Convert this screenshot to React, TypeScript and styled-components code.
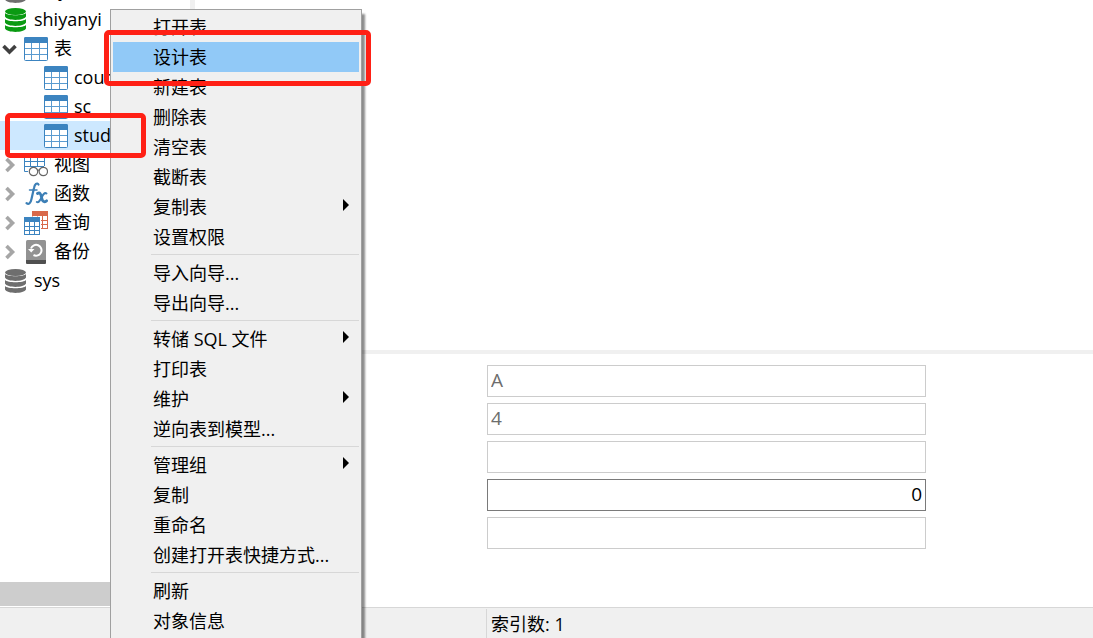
import React from "react";
import styled, { createGlobalStyle } from "styled-components";

const GlobalStyle = createGlobalStyle`
  * { box-sizing: border-box; }
  body {
    margin: 0;
    background: #ffffff;
    color: #000000;
    font-family: "Open Sans", "Noto Sans CJK SC", sans-serif;
    font-size: 18px;
    line-height: 28px;
  }
`;

const Page = styled.div`
  position: relative;
  display: flex;
  flex-direction: column;
  height: 100vh;
  overflow: hidden;
`;

const Workspace = styled.div`
  display: flex;
  flex: 1;
  min-height: 0;
`;

const Sidebar = styled.aside`
  display: flex;
  flex-direction: column;
  width: 195px;
  border-right: 5px solid #f0f0f0;
`;

const Tree = styled.ul`
  display: flex;
  flex: 1;
  flex-direction: column;
  justify-content: flex-start;
  min-height: 0;
  margin: -24px 0 0;
  padding: 0;
  list-style: none;
`;

const TreeRow = styled.li<{ $depth: number; $selected?: boolean }>`
  display: flex;
  flex: none;
  align-items: center;
  height: 29px;
  padding-left: ${(p) => [4, 2, 44][p.$depth]}px;
  background: ${(p) => (p.$selected ? "#cde8ff" : "transparent")};
  white-space: nowrap;

  svg { flex: none; }
`;

const Chevron = styled.svg`
  width: 16px;
  height: 16px;
  margin-right: 6px;
`;

const TreeLabel = styled.span`
  margin-left: 6px;
  padding-bottom: 1px;
`;

const HorizontalScroll = styled.div`
  height: 24px;
  margin-bottom: 1px;
  background: #cdcdcd;
`;

const Main = styled.main`
  display: flex;
  flex: 1;
  flex-direction: column;
  min-width: 0;
`;

const Canvas = styled.section`
  flex: 1;
`;

const Properties = styled.form`
  display: flex;
  flex-direction: column;
  gap: 6px;
  height: 257px;
  padding: 11px 167px 0 292px;
  border-top: 4px solid #f0f0f0;
`;

const Field = styled.input<{ $active?: boolean }>`
  width: 100%;
  height: 32px;
  padding: 0 3px 2px;
  border: 1px solid ${(p) => (p.$active ? "#7a7a7a" : "#cccccc")};
  border-radius: 0;
  outline: none;
  background: #ffffff;
  color: ${(p) => (p.$active ? "#000000" : "#6d6d6d")};
  font: inherit;
  font-size: 19px;
  text-align: ${(p) => (p.$active ? "right" : "left")};
`;

const StatusBar = styled.footer`
  display: flex;
  height: 31px;
  padding-top: 1px;
  border-top: 1px solid #d7d7d7;
  background: #f0f0f0;
`;

const StatusCell = styled.div<{ $first?: boolean }>`
  flex: ${(p) => (p.$first ? "0 0 486px" : "1")};
  padding: 1px 4px 0;
  border-left: ${(p) => (p.$first ? "none" : "1px solid #d7d7d7")};
`;

const Menu = styled.div`
  position: absolute;
  top: 9px;
  left: 110px;
  width: 252px;
  padding: 2px 2px 40px;
  border: 1px solid #a0a0a0;
  background: #f0f0f0;
  box-shadow: 3px 5px 2px rgba(0, 0, 0, 0.45);
`;

const MenuItem = styled.button<{ $active?: boolean }>`
  display: flex;
  align-items: center;
  justify-content: space-between;
  width: 100%;
  height: 30px;
  padding: 0 10px 0 40px;
  border: 0;
  background: ${(p) => (p.$active ? "#91c9f7" : "transparent")};
  color: inherit;
  font: inherit;
  text-align: left;
  white-space: nowrap;
`;

const ArrowGlyph = styled.svg`
  width: 6px;
  height: 12px;
  margin-bottom: 4px;
`;

const MenuRule = styled.hr`
  height: 1px;
  margin: 2px 0 3px 38px;
  border: 0;
  background: #d7d7d7;
`;

const Highlight = styled.div<{ $box: [number, number, number, number] }>`
  position: absolute;
  left: ${(p) => p.$box[0]}px;
  top: ${(p) => p.$box[1]}px;
  width: ${(p) => p.$box[2]}px;
  height: ${(p) => p.$box[3]}px;
  border: 5px solid #ff2015;
  border-radius: 5px;
  pointer-events: none;
`;

const DatabaseIcon = ({ color }: { color: string }) => (
  <svg width="24" height="24" viewBox="0 0 24 24" fill={color}>
    <ellipse cx="11.5" cy="3.5" rx="10.5" ry="3.5" />
    {[5, 11, 17].map((y) => (
      <path key={y} d={`M1 ${y}C3 ${y + 3} 20 ${y + 3} 22 ${y}V${y + 3.5}C20 ${y + 8} 3 ${y + 8} 1 ${y + 3.5}Z`} />
    ))}
  </svg>
);

const TableIcon = () => (
  <svg width="24" height="24" viewBox="0 0 24 24">
    <rect x="0.5" y="0.5" width="23" height="23" rx="1" fill="#fff" stroke="#3c84c0" />
    <path d="M0 6V1.5Q0 0 1.5 0H22.5Q24 0 24 1.5V6Z" fill="#3c84c0" />
    <path d="M7.5 6V23M15.5 6V23M1 11.5H23M1 17.5H23" stroke="#5a9bd0" fill="none" />
  </svg>
);

const ViewIcon = () => (
  <svg width="24" height="24" viewBox="0 0 24 24" fill="none">
    <path d="M0 5V1.5Q0 0 1.5 0H19.5Q21 0 21 1.5V5Z" fill="#3c84c0" />
    <path d="M0.5 4V18.5H4M20.5 4V13M6.5 5V14M13.5 5V14M1 8.5H20M1 13.5H20" stroke="#3c84c0" />
    <circle cx="9.5" cy="18.5" r="4.2" fill="#fff" stroke="#666" strokeWidth="1.2" />
    <circle cx="19.3" cy="18.5" r="4.2" fill="#fff" stroke="#666" strokeWidth="1.2" />
    <path d="M13.5 17.5Q14.4 16.5 15.3 17.5" stroke="#666" strokeWidth="1.2" />
  </svg>
);

const FunctionIcon = () => (
  <svg width="24" height="24" viewBox="0 0 24 24" fill="none" stroke="#3c7fb6" strokeLinecap="round">
    <path d="M14.5 2.5C13 0.2 10.8 2 10 6L7.5 17C6.7 21 4.8 23 2.5 21.2" strokeWidth="2.2" />
    <path d="M5.5 8H13" strokeWidth="1.5" />
    <path d="M13.5 11.5C16 9.8 17 12.5 17.6 15.5C18.3 19 19.5 21 22.6 18.8" strokeWidth="2.8" />
    <path d="M22.5 11.5C20.5 10 18.8 13 17.6 15.5C16 18.5 14.5 21 12.8 20" strokeWidth="2" />
  </svg>
);

const QueryIcon = () => (
  <svg width="24" height="24" viewBox="0 0 24 24" fill="none">
    <rect x="8.5" y="0.5" width="15" height="17" fill="#fff" stroke="#d9694a" />
    <path d="M8 0H24V5H8Z" fill="#d9694a" />
    <path d="M13.5 5V17M18.5 5V17M9 9.5H23M9 13.5H23" stroke="#d9694a" />
    <path d="M0 5.5H17V24H0Z" fill="#fff" />
    <rect x="0.5" y="6.5" width="15" height="17" fill="#fff" stroke="#3c84c0" />
    <path d="M0 6H16V11H0Z" fill="#3c84c0" />
    <path d="M5.5 11V23M10.5 11V23M1 15.5H15M1 19.5H15" stroke="#3c84c0" />
  </svg>
);

const BackupIcon = () => (
  <svg width="24" height="24" viewBox="0 0 24 24" fill="none">
    <rect x="2" y="0" width="20" height="24" rx="1.5" fill="#929292" />
    <path d="M2 20H22V22.5Q22 24 20.5 24H3.5Q2 24 2 22.5Z" fill="#505050" />
    <path d="M7 8.5A5.4 5.4 0 1 1 9.5 15" stroke="#fff" strokeWidth="2" />
    <path d="M4 9H10.5L7.2 12.5Z" fill="#fff" />
  </svg>
);

const Expander = ({ open }: { open?: boolean }) => (
  <Chevron viewBox="0 0 16 16" fill="none" strokeWidth="3.6" stroke={open ? "#404040" : "#a6a6a6"}>
    <path d={open ? "M1.5 5L7.5 11L13.5 5" : "M4.5 2L10.5 8L4.5 14"} />
  </Chevron>
);

const SubmenuArrow = () => (
  <ArrowGlyph viewBox="0 0 6 12" aria-hidden="true">
    <path d="M0 0L6 6L0 12Z" fill="#000" />
  </ArrowGlyph>
);

type Node = { label: string; depth: number; icon: React.ReactNode; open?: boolean; selected?: boolean };

const nodes: Node[] = [
  { label: "shiyan", depth: 0, icon: <DatabaseIcon color="#6e6e6e" /> },
  { label: "shiyanyi", depth: 0, icon: <DatabaseIcon color="#0a9a12" /> },
  { label: "表", depth: 1, icon: <TableIcon />, open: true },
  { label: "course", depth: 2, icon: <TableIcon /> },
  { label: "sc", depth: 2, icon: <TableIcon /> },
  { label: "student", depth: 2, icon: <TableIcon />, selected: true },
  { label: "视图", depth: 1, icon: <ViewIcon /> },
  { label: "函数", depth: 1, icon: <FunctionIcon /> },
  { label: "查询", depth: 1, icon: <QueryIcon /> },
  { label: "备份", depth: 1, icon: <BackupIcon /> },
  { label: "sys", depth: 0, icon: <DatabaseIcon color="#6e6e6e" /> },
];

const groups: { label: string; sub?: boolean; active?: boolean }[][] = [
  [
    { label: "打开表" },
    { label: "设计表", active: true },
    { label: "新建表" },
    { label: "删除表" },
    { label: "清空表" },
    { label: "截断表" },
    { label: "复制表", sub: true },
    { label: "设置权限" },
  ],
  [{ label: "导入向导..." }, { label: "导出向导..." }],
  [
    { label: "转储 SQL 文件", sub: true },
    { label: "打印表" },
    { label: "维护", sub: true },
    { label: "逆向表到模型..." },
  ],
  [
    { label: "管理组", sub: true },
    { label: "复制" },
    { label: "重命名" },
    { label: "创建打开表快捷方式..." },
  ],
  [{ label: "刷新" }, { label: "对象信息" }],
];

export default function App() {
  return (
    <Page>
      <GlobalStyle />
      <Workspace>
        <Sidebar>
          <Tree>
            {nodes.map((n) => (
              <TreeRow key={n.label} $depth={n.depth} $selected={n.selected}>
                {n.depth === 1 && <Expander open={n.open} />}
                {n.icon}
                <TreeLabel>{n.label}</TreeLabel>
              </TreeRow>
            ))}
          </Tree>
          <HorizontalScroll />
        </Sidebar>
        <Main>
          <Canvas />
          <Properties>
            <Field aria-label="排序规则" defaultValue="A" />
            <Field aria-label="基数" defaultValue="4" />
            <Field aria-label="子部分" />
            <Field aria-label="键块大小" defaultValue="0" $active />
            <Field aria-label="注释" />
          </Properties>
        </Main>
      </Workspace>
      <StatusBar>
        <StatusCell $first />
        <StatusCell>索引数: 1</StatusCell>
      </StatusBar>
      <Menu role="menu">
        {groups.map((items, i) => (
          <React.Fragment key={i}>
            {i > 0 && <MenuRule />}
            {items.map((item) => (
              <MenuItem key={item.label} type="button" role="menuitem" $active={item.active}>
                {item.label}
                {item.sub && <SubmenuArrow />}
              </MenuItem>
            ))}
          </React.Fragment>
        ))}
      </Menu>
      <Highlight $box={[104, 30, 267, 56]} />
      <Highlight $box={[5, 113, 141, 45]} />
    </Page>
  );
}
